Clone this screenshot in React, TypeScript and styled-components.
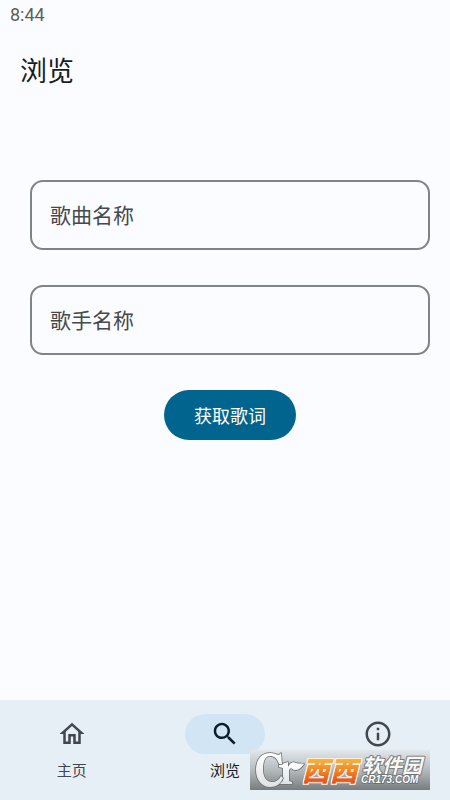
import React from 'react';
import styled, { createGlobalStyle } from 'styled-components';

const GlobalStyle = createGlobalStyle`
  * { box-sizing: border-box; }
  body {
    margin: 0;
    background: #fbfcff;
    color: #191c1e;
    font-family: Roboto, "Noto Sans CJK SC", sans-serif;
  }
  button, input { font-family: inherit; }
`;

const Screen = styled.div`
  position: relative;
  display: flex;
  flex-direction: column;
  min-height: 100vh;
`;

const StatusBar = styled.div`
  height: 30px;
  padding: 0 10px;
  font-size: 18px;
  line-height: 30px;
  color: #5c5e61;
`;

const AppBar = styled.header`
  display: flex;
  align-items: center;
  height: 80px;
  padding: 4px 20px 0;
`;

const Title = styled.h1`
  margin: 0;
  font-size: 27px;
  font-weight: 400;
  line-height: 36px;
`;

const Form = styled.form`
  flex: 1;
  display: flex;
  flex-direction: column;
  align-items: center;
  gap: 35px;
  padding: 70px 20px 20px 30px;
`;

const TextField = styled.input`
  width: 100%;
  height: 70px;
  padding: 2px 18px 0;
  border: 2px solid #7f8487;
  border-radius: 13px;
  background: transparent;
  color: #191c1e;
  font-size: 21px;
  &::placeholder { color: #45494d; opacity: 1; }
`;

const SubmitButton = styled.button`
  height: 50px;
  padding: 4px 30px 0;
  border: 0;
  border-radius: 25px;
  background: #00658e;
  color: #ffffff;
  font-size: 18px;
  line-height: 24px;
`;

const NavBar = styled.nav`
  display: grid;
  grid-template-columns: repeat(3, 1fr);
  gap: 10px;
  height: 100px;
  background: #e7eff6;
`;

const NavItem = styled.button<{ $active?: boolean }>`
  display: flex;
  flex-direction: column;
  align-items: center;
  gap: 7px;
  padding: 14px 0 0;
  border: 0;
  background: transparent;
  color: ${(p) => (p.$active ? '#191c1e' : '#41474d')};
  font-size: 15px;
  line-height: 20px;
`;

const Indicator = styled.span<{ $active?: boolean }>`
  display: flex;
  align-items: center;
  justify-content: center;
  width: 80px;
  height: 40px;
  border-radius: 20px;
  background: ${(p) => (p.$active ? '#d2e5f5' : 'transparent')};
  color: ${(p) => (p.$active ? '#0b1d29' : '#41474d')};
`;

const Icon = styled.svg`
  width: 30px;
  height: 30px;
  fill: currentColor;
`;

const Watermark = styled.svg`
  position: absolute;
  right: 20px;
  bottom: 10px;
  width: 180px;
  height: 40px;
  pointer-events: none;
  font-family: "Noto Sans CJK SC", sans-serif;
  font-weight: 700;
  font-style: italic;
  paint-order: stroke;
  stroke-linejoin: round;
`;

const navItems = [
  {
    name: '主页',
    label: '主页',
    path: 'M12 5.69l5 4.5V18h-2v-6H9v6H7v-7.81l5-4.5M12 3L2 12h3v8h6v-6h2v6h6v-8h3L12 3z',
  },
  {
    name: '浏览',
    label: '浏览',
    active: true,
    path: 'M15.5 14h-.79l-.28-.27C15.41 12.59 16 11.11 16 9.5 16 5.91 13.09 3 9.5 3S3 5.91 3 9.5 5.91 16 9.5 16c1.61 0 3.09-.59 4.23-1.57l.27.28v.79l5 4.99L20.49 19l-4.99-5zm-6 0C7.01 14 5 11.99 5 9.5S7.01 5 9.5 5 14 7.01 14 9.5 11.99 14 9.5 14z',
  },
  {
    name: '关于',
    path: 'M11 7h2v2h-2zm0 4h2v6h-2zm1-9C6.48 2 2 6.48 2 12s4.48 10 10 10 10-4.48 10-10S17.52 2 12 2zm0 18c-4.41 0-8-3.59-8-8s3.59-8 8-8 8 3.59 8 8-3.59 8-8 8z',
  },
];

function SiteMark() {
  return (
    <Watermark viewBox="0 0 180 40" role="img" aria-label="西西软件园 CR173.COM">
      <defs>
        <linearGradient id="plate" x1="0" y1="0" x2="0" y2="1">
          <stop offset="0" stopColor="#e1e7eb" />
          <stop offset="0.5" stopColor="#b5babd" />
          <stop offset="1" stopColor="#777c7e" />
        </linearGradient>
        <linearGradient id="orange" gradientUnits="userSpaceOnUse" x1="0" y1="9" x2="0" y2="33">
          <stop offset="0" stopColor="#f9b72f" />
          <stop offset="1" stopColor="#e2501b" />
        </linearGradient>
        <linearGradient id="silver" x1="0" y1="0" x2="0" y2="1">
          <stop offset="0" stopColor="#ffffff" />
          <stop offset="1" stopColor="#dfe2e3" />
        </linearGradient>
        <filter id="rim" x="-10%" y="-10%" width="120%" height="120%">
          <feMorphology in="SourceAlpha" operator="dilate" radius="1" result="grown" />
          <feFlood floodColor="#fff1de" />
          <feComposite in2="grown" operator="in" result="edge" />
          <feMerge>
            <feMergeNode in="edge" />
            <feMergeNode in="SourceGraphic" />
          </feMerge>
        </filter>
      </defs>
      <rect width="180" height="40" fill="url(#plate)" />
      <g fill="url(#silver)" stroke="#6c7072" strokeWidth="1.6">
        <path d="M29 15L38 12V17C40 13 43 11 46 13C49 14 52 13 54 14C50 20 45 22 41 18L39 20V31L42 32V34H29V32L33 31V18L29 17Z" />
        <path d="M31 3L32 14H29C27 8 24 6 20 6C15 6 13 12 13 19C13 28 17 32 22 32C26 32 29 30 31 26L33 28C31 34 26 37 20 37C12 37 6 30 6 20C6 9 12 3 20 3C24 3 27 5 29 5Z" />
      </g>
      <g fill="url(#orange)" stroke="url(#orange)" strokeWidth="1" fontSize="27" filter="url(#rim)">
        <text x="52" y="31">西</text>
        <text x="80" y="31">西</text>
      </g>
      <text x="112" y="23" fontSize="20" fill="#f7f8f8" stroke="#777b7d" strokeWidth="2">软件园</text>
      <text x="111" y="33" fontSize="10" fontFamily="Liberation Sans, sans-serif" fill="#ffffff" stroke="#64686a" strokeWidth="1.6">CR173.COM</text>
    </Watermark>
  );
}

export default function App() {
  return (
    <>
      <GlobalStyle />
      <Screen>
        <StatusBar>8:44</StatusBar>
        <AppBar>
          <Title>浏览</Title>
        </AppBar>
        <Form onSubmit={(e: React.FormEvent) => e.preventDefault()}>
          <TextField type="text" placeholder="歌曲名称" aria-label="歌曲名称" />
          <TextField type="text" placeholder="歌手名称" aria-label="歌手名称" />
          <SubmitButton type="submit">获取歌词</SubmitButton>
        </Form>
        <NavBar>
          {navItems.map(({ name, label, path, active }) => (
            <NavItem
              key={name}
              type="button"
              $active={active}
              aria-label={name}
              aria-current={active ? 'page' : undefined}
            >
              <Indicator $active={active}>
                <Icon viewBox="0 0 24 24" aria-hidden="true">
                  <path d={path} />
                </Icon>
              </Indicator>
              {label}
            </NavItem>
          ))}
        </NavBar>
        <SiteMark />
      </Screen>
    </>
  );
}
